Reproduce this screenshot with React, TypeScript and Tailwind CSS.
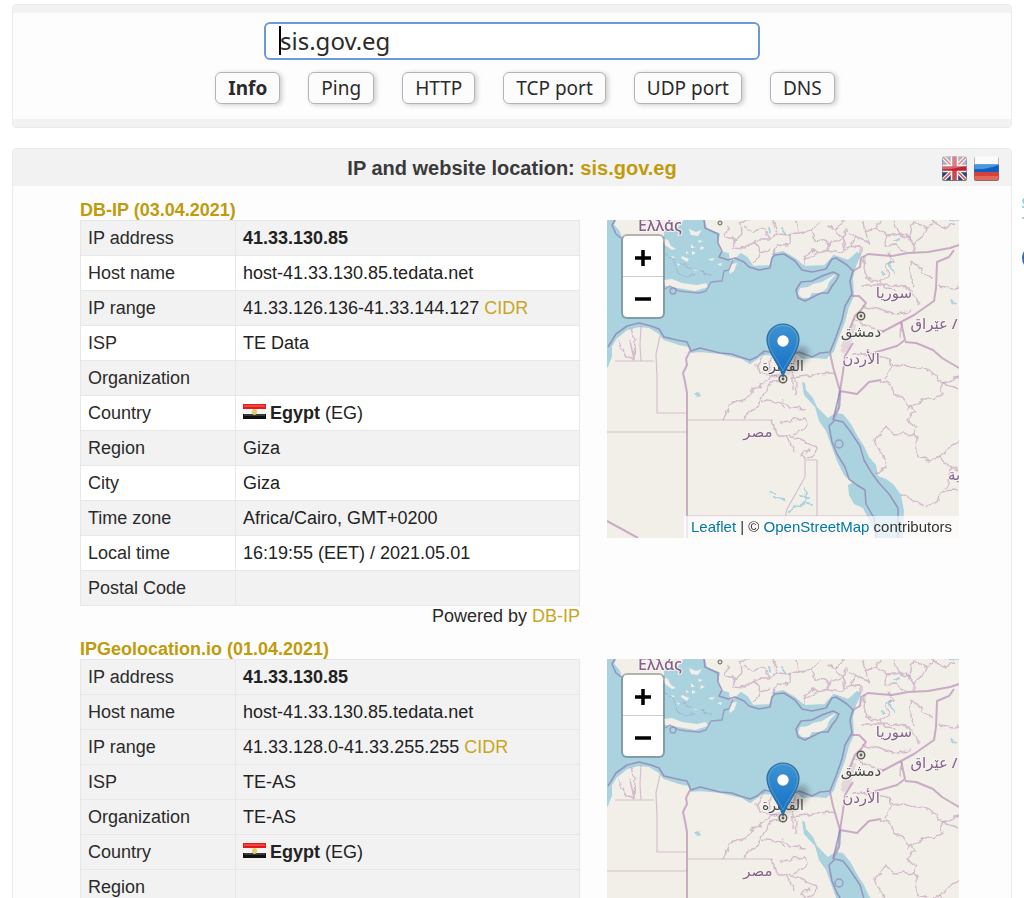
import { useState } from "react";

type Row = {
  label: string;
  value?: string;
  bold?: boolean;
  cidr?: boolean;
  country?: boolean;
};

const tabs = ["Info", "Ping", "HTTP", "TCP port", "UDP port", "DNS"];

const dbIpRows: Row[] = [
  { label: "IP address", value: "41.33.130.85", bold: true },
  { label: "Host name", value: "host-41.33.130.85.tedata.net" },
  { label: "IP range", value: "41.33.126.136-41.33.144.127", cidr: true },
  { label: "ISP", value: "TE Data" },
  { label: "Organization" },
  { label: "Country", country: true },
  { label: "Region", value: "Giza" },
  { label: "City", value: "Giza" },
  { label: "Time zone", value: "Africa/Cairo, GMT+0200" },
  { label: "Local time", value: "16:19:55 (EET) / 2021.05.01" },
  { label: "Postal Code" },
];

const ipGeoRows: Row[] = [
  { label: "IP address", value: "41.33.130.85", bold: true },
  { label: "Host name", value: "host-41.33.130.85.tedata.net" },
  { label: "IP range", value: "41.33.128.0-41.33.255.255", cidr: true },
  { label: "ISP", value: "TE-AS" },
  { label: "Organization", value: "TE-AS" },
  { label: "Country", country: true },
  { label: "Region" },
];

/* ---------- MAP DATA ---------- */
const SEA =
  "M0 0 H8 L6 5 L12 12 L14 18 L58 18 L58 11 L70 10 L74 5 L78 0 H97 L99 9 L112 14 L110 22 L113 32 L121 34 L122 40 L116 39 L126 42 L134 34 L140 38 L146 47 L163 46 L167 34 L176 32 L188 39 L197 47 L218 46 L227 36 L241 41 L246 37 L250 33 L253 35 L248 46 L245 58 L246 76 L241 87 L237 102 L230 120 L226 131 L219 138 L207 137 L196 138 L190 133 L181 138 L170 135 L156 134 L143 143 L135 138 L113 133 L93 131 L84 132 L82 126 L72 124 L57 119 L52 113 L42 107 L32 106 L20 109 L9 118 L4 126 L4 136 L0 147 Z";
const COAST =
  "M8 0 L5 5 L9 14 L14 18 M97 0 L98 8 L111 14 L111 23 L115 31 L112 37 L121 40 L128 38 L137 42 L142 47 L152 50 L163 48 L165 38 L168 35 L177 34 L188 41 L195 50 L205 52 L219 49 L225 39 L229 38 L240 45 L246 51 L243 61 L245 74 L238 86 L235 100 L229 117 L223 132 L213 133 L205 137 L192 132 L184 135 L172 134 L157 131 L150 137 L143 140 L133 137 L125 134 L113 133 L93 128 L84 131 L80 122 L70 120 L57 117 L52 109 L44 106 L32 103 L20 106 L9 114 L1 127";
const RED_SEA =
  "M195 162 L198 163 L199 170 L206 178 L210 187 L221 198 L228 193 L236 194 L244 204 L251 217 L257 226 L262 237 L269 245 L271 256 L279 259 L286 264 L294 275 L297 291 L296 318 H270 L262 300 L256 288 L247 284 L242 275 L241 265 L245 263 L237 255 L230 241 L223 222 L219 211 L212 201 L208 187 L197 175 Z";

const BORDERS = [
  "M83 131 L79 139 L80 145 L76 153 L78 162 L80 173 V318",
  "M223 133 L226 147 L233 171 L232 188 L226 200",
  "M233 171 L250 174 L262 162 L274 160",
  "M246 51 L253 47 L254 38 L261 34 L272 35 L285 36 L301 33 L321 32 L343 28 L352 25",
  "M347 30 L342 37 L330 42 L329 68 L327 81 L307 95 L294 102 L275 112",
  "M294 102 L298 120 L290 126 L266 133",
  "M298 122 L309 123 L326 130 L335 138 L352 148",
  "M245 76 L252 76 L259 83 L254 90 L248 96 L241 113",
  "M233 171 L236 152 L238 136 L246 123",
  "M0 301 L31 318",
];

const STRAIGHT_BORDERS = [
  "M8 141 H47 M34 106 L33 125 L34 141 M53 116 L49 134 L50 157 V193 H79",
  "M0 212 H80 M81 200 H165 M198 238 V257 L180 289 L174 318 M199 240 H210 V296 M81 296 H270",
];

const WINDING_BORDERS = [
  "M12 119 L19 136 L27 139 L23 121 M24 109 L28 120 L27 141",
  "M116 200 L123 184 L139 179 L148 169 L160 160 L170 154",
  "M137 199 L143 191 L151 187 L154 178 L163 164 L173 159 M154 180 L166 182 L174 183 L178 190",
  "M165 200 L169 216 L179 216 L187 231 M158 132 L150 145 L152 153 L172 156 L179 151 L181 139 L168 135 L162 142 L164 151",
  "M190 134 L184 148 L190 163 L189 175 M186 170 L186 158 M184 158 L208 155 L226 154",
  "M173 179 L182 188 L199 189 M173 202 L184 201 L198 197 L200 206 L186 215 L179 216 M182 215 L194 221 L209 227 L208 236 L198 240 L195 237 L202 228",
  "M122 6 L118 15 L129 20 L135 14 L134 3 L141 0 M129 20 L125 27 L138 28 L147 20 L162 20 L158 9 L145 13 L137 7 M147 20 L154 33 L147 42 M162 20 L170 14 L166 0 M170 14 L183 15 L191 12 L189 0 M154 33 L163 29",
  "M183 15 L181 26 L170 25 L166 34 M191 12 L205 10 L208 19 L222 24 L218 32 L203 31 L197 40 L197 47 M205 10 L212 2 M222 24 L235 20 L229 8 L219 7 M197 40 L216 30 L232 33 L245 25 L248 16 L240 9 L235 20",
  "M245 25 L253 28 L253 36 M248 16 L263 22 L258 12 L270 8 L280 16 L277 26 L289 25 L299 32 M280 16 L291 14 L301 17 L307 25 L315 17 L319 8 L328 3 L338 8 L348 4 M307 25 L307 33 M319 8 L309 1",
  "M258 12 L256 1 M270 8 L273 0 M291 14 L287 1 M328 3 L326 0 M301 17 L303 6 L309 1 M235 20 L238 28 M229 8 L236 0",
  "M258 36 L257 48 L259 58 L273 62 L281 57 L279 44 L288 42 L282 33 M273 62 L279 69 L288 70 M254 65 L275 65 L302 67 L305 74 L313 84 M304 41 L302 52 L307 67 M304 41 L326 59 M331 66 L347 68 L352 67",
  "M256 85 L273 89 L289 94 L303 92 M295 102 L294 117 M247 100 L262 107 L279 112 M245 135 L266 133 L281 139 L285 146 L278 159 M281 139 L292 146 L316 147 L328 154 L331 162 L352 169",
  "M274 160 L284 165 L287 174 L296 177 L300 186 L309 191 L300 199 L309 207 L308 213 L311 238 L322 241 L332 236 L352 221 M300 190 L317 180 L336 175 L335 165 L343 160 L352 157",
  "M308 213 L287 215 L277 206 L275 215 L267 219 L270 229 L276 235 L279 248 L269 253 M332 236 L343 247 L342 265 L333 271 L332 281 L319 287 L309 281 L293 273 M333 271 L352 270 M342 247 L352 250",
];

const ISLANDS = [
  "M57 60 L65 59 L75 63 L90 65 L99 63 L101 67 L88 71 L77 69 L58 66 Z",
  "M124 44 L130 43 L127 51 L123 54 L122 50 Z",
  "M191 74 L193 68 L201 67 L206 64 L215 62 L225 56 L230 53 L222 62 L220 68 L214 73 L205 73 L202 78 L195 78 Z",
  "M55 18 L61 20 L64 26 L69 29 L65 30 L58 25 Z",
  "M82 9 L89 12 L95 10 L91 16 L84 15 Z",
  "M85 31 L89 33 L85 35 Z M75 36 L82 39 L80 42 L74 38 Z M94 26 L98 28 L93 30 Z M87 49 L92 50 L88 51 Z M101 39 L108 38 L105 41 Z M110 44 L115 43 L114 46 Z M70 43 L74 44 L71 46 Z M64 36 L68 37 L65 39 Z M91 20 L96 21 L92 23 Z M84 24 L88 28 L84 28 Z M79 31 L82 33 L79 34 Z",
];

function MapTiles({ id }: { id: string }) {
  return (
    <svg className="block size-full" viewBox="0 0 352 318" fill="none" aria-hidden="true">
      <filter id={`wobble-${id}`} filterUnits="userSpaceOnUse" x="-10" y="-10" width="372" height="338">
        <feTurbulence type="fractalNoise" baseFrequency="0.12" numOctaves="2" seed="4" />
        <feDisplacementMap in="SourceGraphic" scale="7" xChannelSelector="R" yChannelSelector="G" />
      </filter>
      <rect width="352" height="318" fill="#f2efe9" />
      <path d={SEA} fill="#aad3df" stroke="#aad3df" strokeWidth="2" />
      <path d={RED_SEA} fill="#aad3df" />
      <path d="M226 200 L232 186 L233 171" stroke="#aad3df" strokeWidth="3" />
      {ISLANDS.map(d => (
        <path key={d} d={d} fill="#f2efe9" />
      ))}

      {/* lakes */}
      <path
        d="M182 293 L186 287 L197 284 L200 276 L197 269 M193 276 L203 278 M200 283 L205 284 M175 8 L179 14 M162 7 L163 12 M285 49 L283 41 M285 49 L288 54 M275 52 L277 54 M287 21 L293 19 M163 272 L169 273 M168 277 L178 278 M88 174 L93 175 M343 81 L349 84 M340 0 L352 1"
        stroke="#aad3df"
        strokeWidth="2"
        strokeLinecap="round"
        filter={`url(#wobble-${id})`}
      />

      <g stroke="#b98fb5" strokeLinejoin="round">
        {STRAIGHT_BORDERS.map(d => (
          <path key={d} d={d} strokeWidth="1.2" opacity="0.5" />
        ))}
        <g filter={`url(#wobble-${id})`}>
          {WINDING_BORDERS.map(d => (
            <path key={d} d={d} strokeWidth="1.4" opacity="0.55" />
          ))}
        </g>
        {BORDERS.map(d => (
          <path key={d} d={d} strokeWidth="2" opacity="0.7" />
        ))}
        <g stroke="#9086b3">
          <path d={COAST} strokeWidth="1.6" opacity="0.8" />
          <path d="M58 69 L63 66 L72 71 L80 72 L92 73 L99 71 L104 62 L115 61 L117 51 L122 50 L126 40" strokeWidth="1.4" opacity="0.7" />
          <circle cx="66" cy="71" r="3" strokeWidth="1.4" opacity="0.7" />
          <path d="M189 70 L194 62 L205 61 L215 56 L226 52 L232 55 L229 61 L225 66 L221 73 L214 73 L206 77 L198 81 L191 78 Z" strokeWidth="1.6" opacity="0.8" />
          <path d="M228 200 L222 206 L225 222 L230 234 L238 247 L242 259 L250 265 L258 270 L259 284 L267 298 L269 318 M228 200 L236 202 L243 211 L253 226 L257 240 L264 252 L272 263 L282 274 L291 288 L291 318 M226 200 L233 171" strokeWidth="1.5" opacity="0.8" />
          <circle cx="232" cy="224" r="4" strokeWidth="1.4" opacity="0.7" />
          <path d="M58 34 L68 41 L82 48 L94 51 L104 57 M66 42 L74 55 L88 55" strokeWidth="1" opacity="0.4" filter={`url(#wobble-${id})`} />
        </g>
        <path d="M235 132 L241 126 L244 113 L247 104 M236 128 L240 118" strokeWidth="5" opacity="0.25" />
      </g>

      {/* cities */}
      <g stroke="#5e5e52" strokeWidth="1.4" fill="#e6e4d8">
        <circle cx="254" cy="96" r="3.8" />
        <circle cx="176" cy="159" r="3.8" />
        <circle cx="113" cy="3" r="2" strokeWidth="1" />
      </g>
      <circle cx="254" cy="96" r="1.4" fill="#5e5e52" />
      <circle cx="176" cy="159" r="1.4" fill="#5e5e52" />

      {/* place names */}
      <g
        fill="#86618a"
        stroke="#f7f4f2"
        strokeWidth="2"
        paintOrder="stroke"
        textAnchor="middle"
        fontSize="15"
        fontWeight="500"
        fontFamily="'Noto Sans', 'DejaVu Sans', sans-serif"
      >
        <text x="53" y="11" fontSize="16">Ελλάς</text>
        <text x="287" y="78">سوريا</text>
        <text x="327" y="109">عێراق /</text>
        <text x="254" y="144">الأردن</text>
        <text x="151" y="217">مصر</text>
        <text x="347" y="260">ية</text>
        <g fill="#4a4a4a">
          <text x="254" y="117">دمشق</text>
          <text x="176" y="151" fontSize="14">القاهرة</text>
        </g>
      </g>
    </svg>
  );
}

function Marker({ id }: { id: string }) {
  return (
    <svg className="absolute top-[103px] left-[159px] h-[55px] w-[56px]" viewBox="0 0 56 55" aria-hidden="true">
      <defs>
        <linearGradient id={`pin-${id}`} x1="0" y1="0" x2="0" y2="1">
          <stop offset="0" stopColor="#3f93cf" />
          <stop offset="1" stopColor="#126fc6" />
        </linearGradient>
        <filter id={`blur-${id}`} x="-30%" y="-30%" width="160%" height="160%">
          <feGaussianBlur stdDeviation="3" />
        </filter>
      </defs>
      <path d="M17 54 L26 30 C31 20 45 22 42 33 C39 42 25 47 17 54 Z" fill="#000" opacity="0.28" filter={`url(#blur-${id})`} />
      <path
        d="M17 54 C15 43 1 30 1 17 C1 8 8 1 17 1 C26 1 33 8 33 17 C33 30 19 43 17 54 Z"
        fill={`url(#pin-${id})`}
        stroke="#2e6c97"
        strokeWidth="1.2"
      />
      <path d="M17 48 C14 39 2.500 28 2.500 17 C2.500 9 9 2.500 17 2.500 C25 2.500 31.500 9 31.500 17 C31.500 28 20 39 17 48 Z" fill="none" stroke="#fff" strokeOpacity="0.2" />
      <circle cx="17" cy="18" r="5.700" fill="#fff" />
    </svg>
  );
}

function LocationMap({ id }: { id: string }) {
  return (
    <div className="relative h-[318px] w-[352px] shrink-0 overflow-hidden">
      <MapTiles id={id} />
      <Marker id={id} />
      <div className="absolute top-3.5 left-3.5 flex w-11 flex-col rounded-md border-2 border-black/25 bg-white bg-clip-padding">
        <button aria-label="Zoom in" className="flex h-[41px] items-center justify-center border-b border-[#ccc] pt-1">
          <svg className="size-4" viewBox="0 0 16 16" stroke="#000" strokeWidth="3.500">
            <path d="M0 8 H16 M8 0 V16" />
          </svg>
        </button>
        <button aria-label="Zoom out" className="flex h-10 items-center justify-center pt-1">
          <svg className="size-4" viewBox="0 0 16 16" stroke="#000" strokeWidth="3.500">
            <path d="M0 8 H16" />
          </svg>
        </button>
      </div>
      <div className="absolute right-0 bottom-0 bg-white/70 px-[7px] text-[15px] leading-[22px] text-[#333]">
        <a href="#leaflet" className="text-[#0078a8]">Leaflet</a> | ©{" "}
        <a href="#osm" className="text-[#0078a8]">OpenStreetMap</a> contributors
      </div>
    </div>
  );
}

function EgyptFlag() {
  return (
    <svg className="mr-1 inline-block h-[15px] w-[23px] align-[0px]" viewBox="0 0 23 15" aria-hidden="true">
      <rect width="23" height="5" fill="#e01c1c" />
      <rect x="1" y="1" width="21" height="2" fill="#ee4643" />
      <rect y="5" width="23" height="5" fill="#f5f5f5" />
      <rect y="10" width="23" height="5" fill="#111" />
      <rect x="1" y="10" width="21" height="2" fill="#3a3a3a" />
      <ellipse cx="11.500" cy="8" rx="2.500" ry="3" fill="#e5cf62" />
    </svg>
  );
}

function UkFlag() {
  return (
    <svg className="size-[25px]" viewBox="0 0 25 25" aria-hidden="true">
      <clipPath id="uk"><rect x="0.500" y="0.500" width="24" height="23.500" rx="1.500" /></clipPath>
      <rect y="1" width="25" height="24" rx="2" fill="#777" />
      <g clipPath="url(#uk)">
        <rect width="25" height="12" fill="#8793b3" />
        <rect y="12" width="25" height="13" fill="#2c416f" />
        <path d="M0 0 L25 25 M25 0 L0 25" stroke="#f2f2f2" strokeWidth="4" />
        <path d="M0 0 L25 25 M25 0 L0 25" stroke="#d0505a" strokeWidth="1.500" />
        <path d="M12.500 0 V25 M0 12.500 H25" stroke="#f4f4f4" strokeWidth="7.500" />
        <path d="M12.500 0 V25" stroke="#cf4650" strokeWidth="4.500" />
        <path d="M0 12.500 H25" stroke="#c32430" strokeWidth="4.500" />
        <path d="M0 0 H25 V9 Q12 14 0 13 Z" fill="#fff" opacity="0.3" />
      </g>
    </svg>
  );
}

function RuFlag() {
  return (
    <svg className="size-[25px]" viewBox="0 0 25 25" aria-hidden="true">
      <clipPath id="ru"><rect x="0.500" y="0.500" width="24" height="23.500" rx="1.500" /></clipPath>
      <rect y="1" width="25" height="24" rx="2" fill="#8a6a6a" />
      <g clipPath="url(#ru)">
        <rect width="25" height="9" fill="#fbfbfb" />
        <rect y="8.500" width="25" height="8" fill="#0b5fc0" />
        <path d="M0 8.500 H25 V9 Q12 14 0 13 Z" fill="#4a97e0" />
        <rect y="16" width="25" height="9" fill="#d8403a" />
        <rect y="20" width="25" height="5" fill="#e2685c" />
      </g>
    </svg>
  );
}

function InfoTable({ title, rows, striped }: { title: string; rows: Row[]; striped?: boolean }) {
  return (
    <table className="w-full table-fixed border-collapse bg-white text-lg leading-[22px]">
      <caption className="h-5 text-left leading-5 font-bold text-[#c09b0b]">{title}</caption>
      <tbody>
        {rows.map((row, i) => (
          <tr key={row.label} className={`h-[35px] ${striped && i % 2 === 1 ? "bg-white" : "bg-[#f2f2f2]"}`}>
            <th scope="row" className="w-[155px] border border-[#e7e7e7] px-[7px] text-left font-normal">
              {row.label}
            </th>
            <td className="border border-[#e7e7e7] px-[7px] text-[#222]">
              {row.country ? (
                <>
                  <EgyptFlag />
                  <b>Egypt</b> (EG)
                </>
              ) : (
                <span className={row.bold ? "font-bold" : ""}>{row.value}</span>
              )}
              {row.cidr && (
                <>
                  {" "}
                  <a href="#cidr" className="text-[#c9a61c]">CIDR</a>
                </>
              )}
            </td>
          </tr>
        ))}
      </tbody>
    </table>
  );
}

export default function App() {
  const [host, setHost] = useState("sis.gov.eg");
  const [active, setActive] = useState("Info");

  return (
    <div className="flex h-screen gap-2.5 overflow-hidden bg-white pl-3 font-['Liberation_Sans',Arial,sans-serif] text-[#2b2b2b]">
      <main className="min-w-0 flex-1 pt-1">

        {/* Search */}
        <section className="rounded border border-[#ebebeb] bg-[#fdfdfd] font-['Noto_Sans','Open_Sans',sans-serif]">
          <div className="h-2 bg-[#f2f2f2]" />
          <div className="flex flex-col items-center gap-3 pt-[9px] pb-[15px]">
            <div className="relative w-[496px]">
              <input
                aria-label="Host"
                className="block h-[38px] w-full rounded-md border-2 border-[#6c9ad6] bg-white px-3.5 pb-0.5 text-2xl caret-transparent outline-none"
                value={host}
                onChange={e => setHost(e.target.value)}
              />
              <span className="absolute top-1 left-[15px] h-[29px] w-0.5 bg-black" />
            </div>
            <div className="flex gap-7 pl-[26px]">
              {tabs.map(tab => (
                <button
                  key={tab}
                  onClick={() => setActive(tab)}
                  className={`h-8 rounded-md border border-[#b4b4b4] bg-[#fcfcfc] px-3 text-[19px] leading-7 shadow-[2px_1px_5px_rgba(0,0,0,0.2)] ${
                    active === tab ? "font-bold" : ""
                  }`}
                >
                  {tab}
                </button>
              ))}
            </div>
          </div>
          <div className="h-2 bg-[#f2f2f2]" />
        </section>

        {/* Results */}
        <section className="mt-5 rounded border border-[#ebebeb] bg-[#fdfdfd]">
          <header className="flex h-[37px] items-center bg-[#f2f2f2] px-3">
            <div className="flex-1" />
            <h1 className="text-xl leading-6 font-bold text-[#3a3a3a]">
              IP and website location: <a href="#host" className="text-[#c09b0b]">sis.gov.eg</a>
            </h1>
            <div className="flex flex-1 justify-end gap-[7px] pt-0.5">
              <a href="#en" aria-label="English"><UkFlag /></a>
              <a href="#ru" aria-label="Русский"><RuFlag /></a>
            </div>
          </header>

          <div className="flex flex-col gap-[13px] pt-3.5 pr-[52px] pl-[67px]">
            <div className="flex gap-[27px]">
              <div className="min-w-0 flex-1">
                <InfoTable title="DB-IP (03.04.2021)" rows={dbIpRows} striped />
                <p className="text-right text-lg leading-5">
                  Powered by <a href="#db-ip" className="text-[#c9a61c]">DB-IP</a>
                </p>
              </div>
              <div className="pt-5">
                <LocationMap id="db-ip" />
              </div>
            </div>

            <div className="flex gap-[27px]">
              <div className="min-w-0 flex-1">
                <InfoTable title="IPGeolocation.io (01.04.2021)" rows={ipGeoRows} />
              </div>
              <div className="pt-5">
                <LocationMap id="ipgeo" />
              </div>
            </div>
          </div>
        </section>
      </main>

      {/* Side column, mostly past the window edge */}
      <aside className="w-0.5 shrink-0 overflow-hidden pt-[198px]" aria-hidden="true">
        <svg className="w-10" viewBox="0 0 40 90" fill="none">
          <path d="M3 0 Q-1 3 3 6 M0 9 H4 M0 20 H2" stroke="#7cc9e6" strokeWidth="1.500" />
          <circle cx="12" cy="60" r="12" fill="#3b67bd" />
        </svg>
      </aside>
    </div>
  );
}
